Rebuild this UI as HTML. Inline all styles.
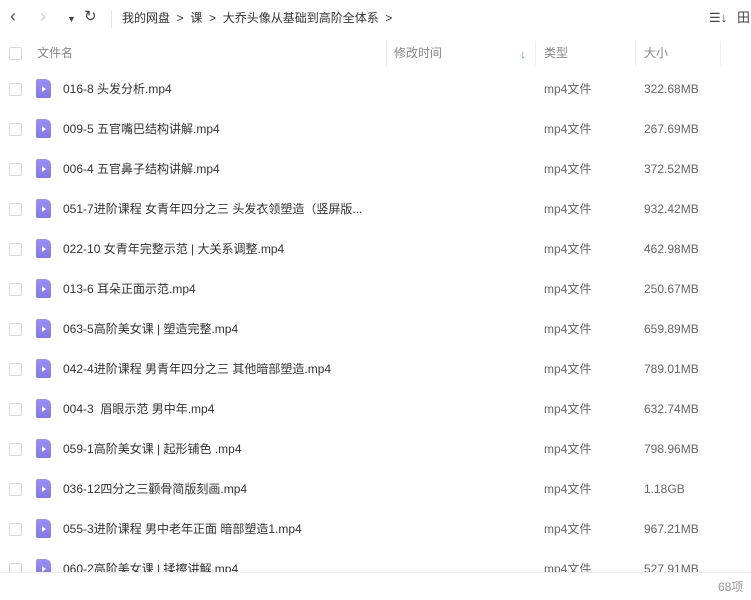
<!DOCTYPE html><html><head><meta charset="utf-8"><style>
body{margin:0;width:751px;height:599px;overflow:hidden;background:#fff;font-family:"Liberation Sans","Noto Sans CJK SC",sans-serif;font-size:12px;line-height:16px;color:#333;position:relative}
.a{position:absolute;white-space:nowrap}
.hdr{position:absolute;left:0;top:36px;width:751px;height:35px;background:#fff}
.cb{position:absolute;width:11px;height:11px;border:1px solid #d9d9d9;border-radius:2px;left:9px}
.ic{position:absolute;left:36px;width:15px;height:19px;background:linear-gradient(#9c8ff5,#7f7ae8);border-radius:2px 6px 2px 2px}
.ic:after{content:"";position:absolute;left:6px;top:7px;border-left:4px solid #fff;border-top:3px solid transparent;border-bottom:3px solid transparent}
.row{position:absolute;left:0;width:751px;height:40px}
.row .n{left:63px;top:12px}
.row .t{left:544px;top:12px;color:#666}
.row .s{left:644px;top:12px;color:#666}
</style></head><body>
<div class="a" style="left:10px;top:8px;font-size:18px;color:#555">‹</div>
<div class="a" style="left:40px;top:8px;font-size:18px;color:#ccc">›</div>
<div class="a" style="left:67px;top:11px;font-size:9px;color:#444">▼</div>
<div class="a" style="left:84px;top:9px;font-size:15px;color:#444">↻</div>
<div class="a" style="left:111px;top:10px;width:1px;height:18px;background:#e5e5e5"></div>
<div class="a" style="left:122px;top:10px;color:#333">我的网盘 &nbsp;&gt;&nbsp; 课 &nbsp;&gt;&nbsp; 大乔头像从基础到高阶全体系 &nbsp;&gt;</div>
<div class="a" style="left:709px;top:10px;font-size:13px;color:#444">☰↓</div>
<div class="a" style="left:737px;top:10px;font-size:13px;color:#444">田</div>
<div class="hdr">
<div class="cb" style="top:11px"></div>
<div class="a" style="left:37px;top:9px;color:#888">文件名</div>
<div class="a" style="left:386px;top:5px;width:1px;height:25px;background:#eee"></div>
<div class="a" style="left:394px;top:9px;color:#888">修改时间</div>
<div class="a" style="left:520px;top:10px;color:#3b9eee;font-weight:bold">↓</div>
<div class="a" style="left:535px;top:5px;width:1px;height:25px;background:#eee"></div>
<div class="a" style="left:544px;top:9px;color:#888">类型</div>
<div class="a" style="left:635px;top:5px;width:1px;height:25px;background:#eee"></div>
<div class="a" style="left:644px;top:9px;color:#888">大小</div>
<div class="a" style="left:720px;top:5px;width:1px;height:25px;background:#eee"></div>
</div>
<div class="row" style="top:69px"><div class="cb" style="top:14px"></div><div class="ic" style="top:10px"></div><div class="a n">016-8 头发分析.mp4</div><div class="a t">mp4文件</div><div class="a s">322.68MB</div></div>
<div class="row" style="top:109px"><div class="cb" style="top:14px"></div><div class="ic" style="top:10px"></div><div class="a n">009-5 五官嘴巴结构讲解.mp4</div><div class="a t">mp4文件</div><div class="a s">267.69MB</div></div>
<div class="row" style="top:149px"><div class="cb" style="top:14px"></div><div class="ic" style="top:10px"></div><div class="a n">006-4 五官鼻子结构讲解.mp4</div><div class="a t">mp4文件</div><div class="a s">372.52MB</div></div>
<div class="row" style="top:189px"><div class="cb" style="top:14px"></div><div class="ic" style="top:10px"></div><div class="a n">051-7进阶课程 女青年四分之三 头发衣领塑造（竖屏版...</div><div class="a t">mp4文件</div><div class="a s">932.42MB</div></div>
<div class="row" style="top:229px"><div class="cb" style="top:14px"></div><div class="ic" style="top:10px"></div><div class="a n">022-10 女青年完整示范 | 大关系调整.mp4</div><div class="a t">mp4文件</div><div class="a s">462.98MB</div></div>
<div class="row" style="top:269px"><div class="cb" style="top:14px"></div><div class="ic" style="top:10px"></div><div class="a n">013-6 耳朵正面示范.mp4</div><div class="a t">mp4文件</div><div class="a s">250.67MB</div></div>
<div class="row" style="top:309px"><div class="cb" style="top:14px"></div><div class="ic" style="top:10px"></div><div class="a n">063-5高阶美女课 | 塑造完整.mp4</div><div class="a t">mp4文件</div><div class="a s">659.89MB</div></div>
<div class="row" style="top:349px"><div class="cb" style="top:14px"></div><div class="ic" style="top:10px"></div><div class="a n">042-4进阶课程 男青年四分之三 其他暗部塑造.mp4</div><div class="a t">mp4文件</div><div class="a s">789.01MB</div></div>
<div class="row" style="top:389px"><div class="cb" style="top:14px"></div><div class="ic" style="top:10px"></div><div class="a n">004-3 &nbsp;眉眼示范 男中年.mp4</div><div class="a t">mp4文件</div><div class="a s">632.74MB</div></div>
<div class="row" style="top:429px"><div class="cb" style="top:14px"></div><div class="ic" style="top:10px"></div><div class="a n">059-1高阶美女课 | 起形铺色 .mp4</div><div class="a t">mp4文件</div><div class="a s">798.96MB</div></div>
<div class="row" style="top:469px"><div class="cb" style="top:14px"></div><div class="ic" style="top:10px"></div><div class="a n">036-12四分之三颧骨简版刻画.mp4</div><div class="a t">mp4文件</div><div class="a s">1.18GB</div></div>
<div class="row" style="top:509px"><div class="cb" style="top:14px"></div><div class="ic" style="top:10px"></div><div class="a n">055-3进阶课程 男中老年正面 暗部塑造1.mp4</div><div class="a t">mp4文件</div><div class="a s">967.21MB</div></div>
<div class="row" style="top:549px"><div class="cb" style="top:14px"></div><div class="ic" style="top:10px"></div><div class="a n">060-2高阶美女课 | 揉擦讲解.mp4</div><div class="a t">mp4文件</div><div class="a s">527.91MB</div></div>
<div class="a" style="left:0;top:572px;width:751px;height:27px;background:#fff;border-top:1px solid #eee;box-shadow:0 -2px 4px rgba(0,0,0,0.04)"></div>
<div class="a" style="left:718px;top:579px;color:#999">68项</div>
</body></html>
